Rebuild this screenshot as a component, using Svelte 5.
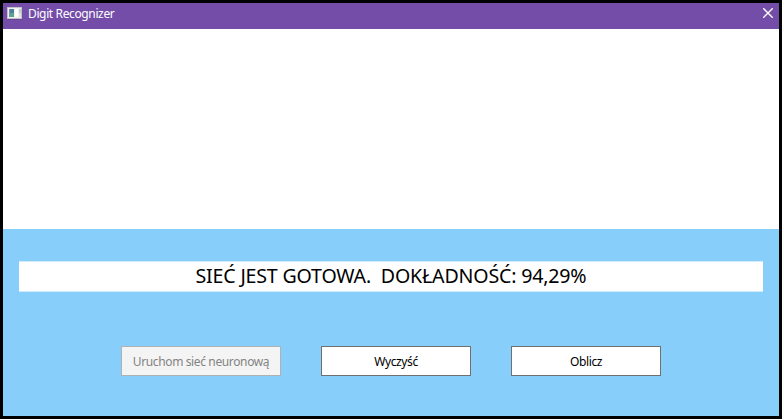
<script>
  const accuracy = '94,29%';
  const actions = [
    { label: 'Uruchom sieć neuronową', kind: 'run', disabled: true },
    { label: 'Wyczyść', kind: 'clear', disabled: false },
    { label: 'Oblicz', kind: 'compute', disabled: false }
  ];
</script>

<div class="window">
  <header>
    <svg class="app-icon" width="15" height="13" viewBox="0 0 15 13" shape-rendering="crispEdges">
      <rect width="15" height="12" fill="#c4c0c8" />
      <rect y="12" width="15" height="1" fill="#68459a" />
      <rect x="1" y="1" width="13" height="10" fill="#f0f0f0" />
      <rect x="2" y="2" width="5" height="8" fill="#4c7f9e" />
      <rect x="3" y="6" width="4" height="4" fill="#58a58c" />
      <rect x="2" y="2" width="1" height="8" fill="#7d93b0" />
      <rect x="8" y="2" width="3" height="8" fill="#ffffff" />
      <rect x="12" y="2" width="2" height="4" fill="#b9d3c4" />
      <rect x="12" y="6" width="2" height="4" fill="#dfe5e2" />
    </svg>
    <span class="title">Digit Recognizer</span>
    <svg class="close" width="10" height="10" viewBox="0 0 10 10">
      <path d="M0.2 0.2L9.8 9.8M9.8 0.2L0.2 9.8" stroke="#fff" stroke-width="1.4" fill="none" />
    </svg>
  </header>
  <div class="canvas"></div>
  <main>
    <div class="status"><span>SIEĆ JEST GOTOWA.&nbsp; DOKŁADNOŚĆ: {accuracy}</span></div>
    <div class="actions">
      {#each actions as action}
        <button class={action.kind} disabled={action.disabled}>{action.label}</button>
      {/each}
    </div>
  </main>
</div>

<style>
  .window {
    box-sizing: border-box;
    width: 782px;
    height: 419px;
    border: 3px solid #000;
    display: flex;
    flex-direction: column;
    font-family: 'Noto Sans', 'Open Sans', sans-serif;
    background: #fff;
  }
  header {
    height: 26px;
    flex: none;
    box-sizing: border-box;
    display: flex;
    align-items: flex-start;
    padding: 4px 6px 0 4px;
    background: #744da9;
  }
  .app-icon {
    flex: none;
  }
  .title {
    margin-left: 6px;
    margin-top: -1px;
    font-size: 12px;
    line-height: 16px;
    letter-spacing: -0.37px;
    color: #fff;
    white-space: nowrap;
  }
  .close {
    flex: none;
    margin-left: auto;
    margin-top: 1px;
  }
  .canvas {
    height: 200px;
    flex: none;
  }
  main {
    flex: 1;
    background: #87cefa;
    padding: 32px 16px 0;
  }
  .status {
    box-sizing: border-box;
    height: 31px;
    display: flex;
    justify-content: center;
    align-items: flex-start;
    background: #fff;
    border: solid #cfecfd;
    border-width: 1px 0;
    font-size: 19.6px;
    line-height: 27px;
    letter-spacing: -0.18px;
    color: #000;
    white-space: nowrap;
  }
  .actions {
    display: flex;
    justify-content: center;
    gap: 40px;
    margin-top: 54px;
  }
  button {
    box-sizing: border-box;
    width: 150px;
    height: 30px;
    padding: 2px 0 0;
    border: 1px solid #707070;
    border-radius: 0;
    background: #fff;
    color: #000;
    font-family: inherit;
    font-size: 12px;
    line-height: 16px;
    letter-spacing: -0.37px;
    white-space: nowrap;
  }
  button.run {
    width: 160px;
  }
  button:disabled {
    background: #f4f4f4;
    border-color: #adb2b5;
    color: #838383;
  }
</style>
